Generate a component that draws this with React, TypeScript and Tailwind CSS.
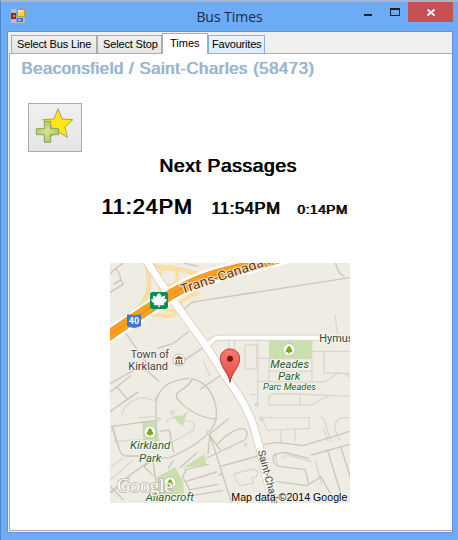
import React from "react";

const sans = "font-['Liberation_Sans',Arial,sans-serif]";
// Regular weight drawn twice, one pixel apart.
const heavy = "font-normal [text-shadow:1px_0_currentColor]";

function FormIcon() {
  return (
    <svg width="14" height="14" viewBox="0 0 14 14" shapeRendering="crispEdges">
      <rect width="14" height="14" fill="#b9bcc4" />
      <rect x="5" y="1" width="1" height="12" fill="#7fa6dd" />
      <rect x="0" y="4" width="5" height="6" fill="#b01c16" />
      <rect x="2" y="6" width="2" height="2" fill="#ef8378" />
      <rect x="6" y="0" width="8" height="8" fill="#c79a1c" />
      <rect x="7" y="1" width="6" height="6" fill="#fbd64b" />
      <rect x="7" y="1" width="4" height="2" fill="#fdeaa0" />
      <rect x="6" y="9" width="6" height="4" fill="#3f74d8" />
      <rect x="7" y="10" width="3" height="2" fill="#8fb5f5" />
    </svg>
  );
}

function TitleBar() {
  return (
    <div className="relative flex h-[29px] shrink-0 items-start justify-center">
      <div className="absolute left-[10px] top-[7px]"><FormIcon /></div>
      <div className="pt-[5px] font-['Open_Sans','Noto_Sans',sans-serif] text-[14px] leading-[20px] tracking-[-0.05px] text-[#1b2b44]">Bus Times</div>
      <div className="absolute right-[5px] top-0 flex h-[20px]">
        <svg width="90" height="20" viewBox="0 0 90 20" shapeRendering="crispEdges">
          <rect x="1" y="12" width="8" height="2" fill="#1e1e1e" />
          <path d="M27 6h10v8h-10zM28 8v5h8v-5z" fill="#1e1e1e" fillRule="evenodd" />
          <rect x="45" width="45" height="20" fill="#c75050" />
          <path d="M64.500 7.500l7 6M71.500 7.500l-7 6" stroke="#fff" strokeWidth="1.7" shapeRendering="auto" />
        </svg>
      </div>
    </div>
  );
}

function Tabs() {
  const t = `h-[18px] border border-b-0 text-[11px] leading-[17px] text-black whitespace-nowrap pl-[5px] ${sans}`;
  return (
    <div className="flex h-[21px] shrink-0 items-end pl-[3px]">
      <div className={`${t} w-[86px] border-[#acacac] bg-gradient-to-b from-[#f0f0f0] to-[#e5e5e5] tracking-[-0.15px]`}>Select Bus Line</div>
      <div className={`${t} w-[65px] border-[#acacac] bg-gradient-to-b from-[#f0f0f0] to-[#e5e5e5] tracking-[-0.15px]`}>Select Stop</div>
      <div className={`relative z-10 -mb-px h-[21px] w-[46px] border border-b-0 border-[#acacac] bg-white pl-[7px] text-[11px] leading-[18px] text-black ${sans}`}>Times</div>
      <div className={`h-[18px] w-[57px] whitespace-nowrap border border-b-0 border-[#7eb4ea] bg-gradient-to-b from-[#ecf4fc] to-[#dcecfc] pl-[3px] text-[11px] leading-[17px] tracking-[-0.2px] text-black ${sans}`}>Favourites</div>
    </div>
  );
}

function AddFavourite() {
  return (
    <div className="flex h-[49px] w-[54px] border border-[#acacac] bg-gradient-to-b from-[#f0f0f0] to-[#e5e5e5]">
      <svg width="52" height="47" viewBox="87 42 156 141">
        <defs>
          <radialGradient id="plus"><stop offset="0" stopColor="#d3e58f" /><stop offset="1" stopColor="#a9c957" /></radialGradient>
        </defs>
        <path d="M174 56l13 31 32 2-24 22 7 31-28-17-27 17 9-32-28-21 34-2z" fill="#ffe60f" stroke="#aaa078" strokeWidth="3" />
        <path d="M133 94h19v22h24v18h-24v23h-19v-23h-24v-18h24z" fill="url(#plus)" fillOpacity=".9" stroke="#8fa16a" strokeWidth="3" />
      </svg>
    </div>
  );
}

function Tree({ x, y }: { x: number; y: number }) {
  return (
    <g transform={`translate(${x} ${y})`}>
      <circle r="18" fill="#fff" stroke="#b5b5a8" strokeWidth="2" />
      <path d="M0-12l6 6-1 2 5 6-2 1 3 5H2v4h-4V8h-9l3-5-2-1 5-6-1-2z" fill="#72ad0b" />
    </g>
  );
}

function MapView() {
  const orange = "M-10 222C60 172 130 128 185 93C265 45 330 30 400 14L540-24";
  const main = "M104-14L165 78 285 244 350 345C425 448 430 480 452 568L492 740";
  const side = "M280 256l28-24q8-8 22-8h300";
  return (
    <svg className="block" width="240" height="240" viewBox="0 0 720 720">
      <defs>
        <linearGradient id="pin" x2="0" y2="1"><stop stopColor="#fb7771" /><stop offset="1" stopColor="#e44b43" /></linearGradient>
      </defs>
      <rect width="720" height="720" fill="#efece3" />

      <g fill="#c9dfad">
        <path d="M477 233h130v56H477z" />
        <path d="M97 474l40 1 12 60-50-3z" />
        <path d="M190 458l26 0 20-14-12 22-4 24-18-14z" />
        <path d="M135 646l60-34 24 42 4 45-84 4z" />
        <path d="M219 614l64-41 6 32z" />
      </g>

      <g fill="none" stroke="#dbd7cc" strokeWidth="4" strokeLinejoin="round">
        <path d="M36 456c0-28 40-52 68-52l29 9 8-14M85 465l48-5" />
        <path d="M168 478c15-25 30-12 45 0 14-5 25-8 36 0 10 12 2 22-12 32l-60 32" />
        <path d="M10 535l85-5M10 490l15 65" />
        <path d="M405 250q0-4 4-4h32v72h-32q-4-2-4-6zM443 232v195M356 232v60M374 232v60" />
        <path d="M443 286h34M477 289v70M443 355l200 2 40-26h37M606 290v68M606 265h114M642 265v65M642 330h50q20 2 28 14M477 325h128" />
        <path d="M477 400l12-7h82l95 5 54 2M477 400v26h128l50-28M571 393v34M420 395h20" />
        <path d="M452 464h146v32l-126 6-16-36M512 502v36M556 500v36M630 464h10l24 74M675 500q-2-34 25-36h20M675 500l14 32" />
        <path d="M372 632l60-14 12 8-4 14-14 4 4 16-38 8q-12-4-20-36zM495 570l8 40M515 585q10-10 30-6l60 18" />
        <path d="M5 610l35-25M2 650l68-60M5 690l55-50M615 590l20 75M640 495l14 40" />
        <path d="M280 295l20 44M675 155l8 60" />
      </g>
      <g fill="none" stroke="#cac6ba" strokeWidth="4" strokeLinejoin="round" strokeLinecap="round">
        <path d="M0 32l18-16 12 20 2 14-20 14M0 88l40-24-8-14M18 16L40 0M222 0l42 10" />
        <path d="M206 152l26-22q8-10 24-14L720 44" />
        <path d="M676 0l12 30 14 10" />
        <path d="M48 212l70 100M236 206l-48 36-46 14M285 250l-62 42M118 312l-10 8 38 34M0 362l80-45" />
        <path d="M0 388l20-16 34 38M0 446l82-58M20 372l42-34" />
        <path d="M138 535V425c2-48 40-75 100-79M246 348c-4 16-20 24-46 44l0 14c40 44 78 60 118 62" />
        <path d="M246 348C300 356 325 420 318 470 302 525 232 560 180 584L130 586" />
        <path d="M272 378l66-45M5 490l134-18M5 490l26 76q5 13 22 13h35q20-5 40 4M150 505l28-4 13 66M130 586l-70 50L0 690M130 586l-28 25 26 26M128 586l8 60" />
        <path d="M0 670l40 40M175 615l15-22M298 512l30 92 37 116M300 512l55-44M330 560l-32-44" />
        <path d="M320 545c28-30 60-50 80-48 14 6 14 22 4 34L290 585M226 620l70-16M228 655l92-28M240 680l84-16M228 620l-10 22 30 55 90-14" />
        <path d="M332 610l115-32M338 632l-12 4M260 570L210 614" />
        <path d="M462 544l40-6 78 10L720 505M604 576l116-32M652 560l40 130M692 550l28 90" />
        <path d="M490 578q-4 28 20 32l76 10 10 42M490 578q20-12 40-8l66 16M500 656l90 12 42-26M632 640l28 50" />
        <path d="M300 512l-6 60" />
      </g>
      <g fill="#efece3" stroke="#cac6ba" strokeWidth="3">
        <circle cx="145" cy="469" r="5" /><circle cx="187" cy="449" r="5" /><circle cx="295" cy="508" r="5" /><circle cx="453" cy="467" r="5" /><circle cx="440" cy="425" r="4" /><circle cx="407" cy="545" r="4" />
      </g>

      <g fill="none">
        <g stroke="#e4d3a6" strokeWidth="13">
          <path d="M108 0c16 50 10 90-10 120-16 22-40 38-62 54M118 6c28 12 84 6 124 22 30 12 60 10 86 8" />
        </g>
        <g stroke="#ffdf9f" strokeWidth="10">
          <path d="M108 0c16 50 10 90-10 120-16 22-40 38-62 54M118 6c28 12 84 6 124 22 30 12 60 10 86 8" />
          <ellipse cx="176" cy="40" rx="27" ry="28" />
          <path d="M152 58c-8 14-5 22 4 30M200 54c6 14-6 26-14 40M160 118c-2 18 4 26 14 32M194 118c8 14 6 26-6 36" />
          <path d="M70 168c40-14 66-14 90-10 34 6 48-6 46-24-2-16 30-34 62-46" />
          <path d="M172 146q10-12 22 0" />
        </g>
      </g>

      <path d={side} fill="none" stroke="#ccc8bd" strokeWidth="17" />
      <path d={main} fill="none" stroke="#ccc8bd" strokeWidth="25" />
      <path d={side} fill="none" stroke="#fff" strokeWidth="13" />
      <path d={main} fill="none" stroke="#fff" strokeWidth="21" />

      <path d={orange} fill="none" stroke="#fff" strokeWidth="46" />
      <path d={orange} fill="none" stroke="#d98a25" strokeWidth="31" />
      <path d={orange} fill="none" stroke="#ff9f20" strokeWidth="27" />
      <path d={orange} fill="none" stroke="#e88b1d" strokeWidth="3" />

      <rect x="120" y="87" width="54" height="51" rx="8" fill="#0a8f5b" />
      <path d="M147 90C152 94 155 98 155 103C159 99 163 98 165 98C165 102 164 106 162 108C166 107 169 108 171 110C169 115 165 119 161 121L163 125C158 127 153 127 149 126L149 133H145L145 126C141 127 136 127 131 125L133 121C129 119 125 115 123 110C125 108 128 107 132 108C130 106 129 102 129 98C131 98 135 99 139 103C139 98 142 94 147 90Z" fill="#fff" />
      <path d="M51 154q21 5 42 0v34q-5 4-21 7-16-3-21-7z" fill="#3979cf" />
      <g className="font-['Roboto',sans-serif]">
        <text x="72" y="182" fontSize="27" fontWeight="700" fill="#fff" textAnchor="middle">40</text>
        <g fontSize="34" fill="#424242" stroke="#f7f5ef" strokeWidth="6" paintOrder="stroke" strokeLinejoin="round">
          <text x="62" y="284" textLength="115" lengthAdjust="spacingAndGlyphs">Town of</text>
          <text x="55" y="320" textLength="119" lengthAdjust="spacingAndGlyphs">Kirkland</text>
          <text x="628" y="237" fontSize="34" textLength="102" lengthAdjust="spacingAndGlyphs">Hymus</text>
          <text transform="translate(443 565) rotate(75)" fontSize="31" textLength="185" lengthAdjust="spacingAndGlyphs">Saint-Charles</text>
        </g>
        <text transform="translate(217 92) rotate(-18.500)" fontSize="39" fill="#5e351d" stroke="#ffe9bd" strokeWidth="6" paintOrder="stroke" strokeLinejoin="round" textLength="352" lengthAdjust="spacingAndGlyphs">Trans-Canada Hwy</text>
      </g>

      <circle cx="207" cy="291" r="18" fill="#fff" stroke="#aaa499" strokeWidth="2" />
      <path d="M195 286l12-8 12 8v3h-24zM197 291h4v9h-4zM205 291h4v9h-4zM213 291h4v9h-4zM195 301h24v3h-24z" fill="#805e43" />
      <Tree x={537} y={260} />
      <Tree x={120} y={507} />
      <Tree x={180} y={660} />
      <g className="font-['Roboto',sans-serif]" fontStyle="italic" fontSize="35" fill="#295e31" stroke="#f6f7ed" strokeWidth="6" paintOrder="stroke" strokeLinejoin="round">
        <text x="481" y="315" textLength="116" lengthAdjust="spacingAndGlyphs">Meades</text>
        <text x="504" y="351" textLength="67" lengthAdjust="spacingAndGlyphs">Park</text>
        <text x="459" y="381" fontSize="26" textLength="159" lengthAdjust="spacingAndGlyphs">Parc Meades</text>
        <text x="60" y="557" textLength="121" lengthAdjust="spacingAndGlyphs">Kirkland</text>
        <text x="87" y="596" textLength="67" lengthAdjust="spacingAndGlyphs">Park</text>
        <text x="107" y="713" fontSize="34" textLength="145" lengthAdjust="spacingAndGlyphs">Allancroft</text>
      </g>

      <path d="M360 358c-3-27-29-45-29-71 0-18 14-29 29-29s29 11 29 29c0 26-26 44-29 71z" fill="url(#pin)" stroke="#b93b35" strokeWidth="3" />
      <circle cx="360" cy="287" r="9" fill="#671b18" />
      <g fontSize="56" className="font-['Liberation_Serif',serif]">
        <text x="21" y="686" fill="#fff" stroke="#b9b6ab" strokeWidth="5" paintOrder="stroke" textLength="168" lengthAdjust="spacingAndGlyphs">Google</text>
      </g>
      <text x="364" y="713" fontSize="32" fill="#000" stroke="#f4f2ec" strokeWidth="5" paintOrder="stroke" textLength="348" className={sans}>Map data ©2014 Google</text>
    </svg>
  );
}

export default function App() {
  return (
    <div className="flex h-[540px] w-[458px] flex-col overflow-hidden border-l border-t-2 border-l-[#4f86c4] border-t-[#a9b5c5] bg-[#6cabf5]">
      <TitleBar />
      <div className="ml-[6px] flex h-[502px] w-[446px] flex-col border border-[#5d95d5] bg-[#f0f0f0]">
        <Tabs />
        <div className="ml-px flex h-[478px] flex-col border-y border-l border-[#acacac] bg-white">
          <h1 className={`ml-[11px] mt-[4px] h-[20px] whitespace-nowrap text-[16.6px] leading-[21px] tracking-[0.61px] text-[#99b4d1] ${sans} ${heavy}`}>Beaconsfield / Saint-Charles (58473)</h1>
          <div className="ml-[18px] mt-[25px]"><AddFavourite /></div>
          <h2 className={`ml-[149px] mt-px h-[25px] whitespace-nowrap text-[19.2px] leading-[25px] tracking-[0.65px] text-black ${sans} ${heavy}`}>Next Passages</h2>
          <div className={`ml-[91px] mt-[15px] flex h-[28px] items-baseline whitespace-nowrap leading-[28px] text-black ${sans} ${heavy}`}>
            <span className="w-[110px] text-[21.6px] tracking-[0.95px]">11:24PM</span>
            <span className="w-[86px] text-[16.5px] tracking-[0.6px]">11:54PM</span>
            <span className="text-[13.6px] tracking-[0.6px]">0:14PM</span>
          </div>
          <div className="ml-[100px] mt-[42px] h-[240px] w-[240px]"><MapView /></div>
        </div>
      </div>
    </div>
  );
}
